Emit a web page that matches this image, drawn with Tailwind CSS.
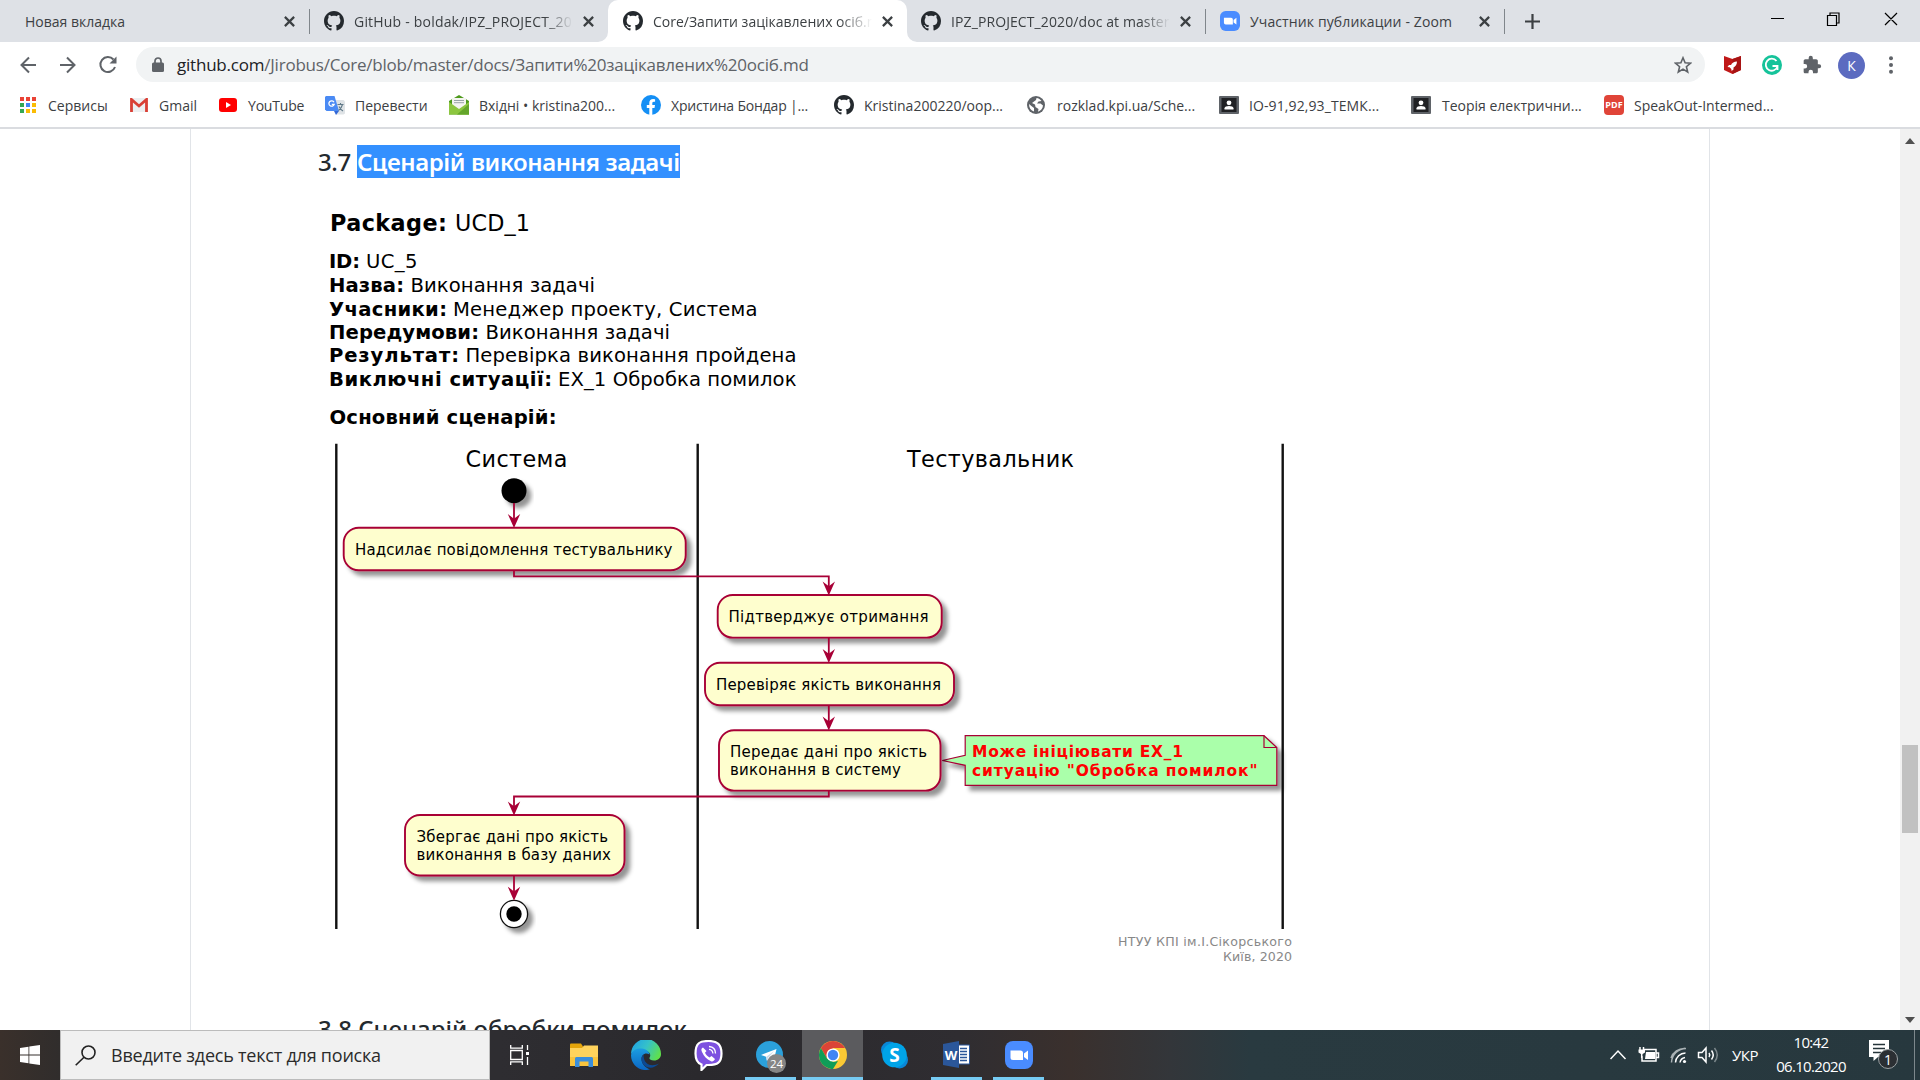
<!DOCTYPE html>
<html lang="uk">
<head>
<meta charset="utf-8">
<title>Core/Запити зацікавлених осіб.md</title>
<script src="https://cdn.jsdelivr.net/npm/@tailwindcss/browser@4"></script>
</head>
<body class="w-[1920px] h-[1080px] overflow-hidden bg-white flex flex-col font-['Open_Sans','Noto_Sans',sans-serif] text-[14px] text-[#3c4043]">

<svg class="hidden">
  <symbol id="gh" viewBox="0 0 16 16"><path fill="#24292e" d="M8 0C3.58 0 0 3.58 0 8c0 3.54 2.29 6.53 5.47 7.59.4.07.55-.17.55-.38 0-.19-.01-.82-.01-1.49-2.01.37-2.53-.49-2.69-.94-.09-.23-.48-.94-.82-1.13-.28-.15-.68-.52-.01-.53.63-.01 1.08.58 1.23.82.72 1.21 1.87.87 2.33.66.07-.52.28-.87.51-1.07-1.78-.2-3.64-.89-3.64-3.95 0-.87.31-1.59.82-2.15-.08-.2-.36-1.02.08-2.12 0 0 .67-.21 2.2.82.64-.18 1.32-.27 2-.27s1.36.09 2 .27c1.53-1.04 2.2-.82 2.2-.82.44 1.1.16 1.92.08 2.12.51.56.82 1.27.82 2.15 0 3.07-1.87 3.75-3.65 3.95.29.25.54.73.54 1.48 0 1.07-.01 1.93-.01 2.2 0 .21.15.46.55.38A8.01 8.01 0 0016 8c0-4.42-3.58-8-8-8z"/></symbol>
  <symbol id="x" viewBox="0 0 10 10"><path d="M.8.8 9.2 9.2M9.2.8.8 9.2" stroke="#3c4043" stroke-width="2"/></symbol>
  <symbol id="zoom" viewBox="0 0 28 28"><rect width="28" height="28" rx="8" fill="#4a8cff"/><path fill="#fff" d="M5.500 9.500h10a2.500 2.500 0 0 1 2.500 2.500v7H8a2.500 2.500 0 0 1-2.500-2.500zM19 12.500l4-3v9.500l-4-3z"/></symbol>
  <symbol id="contact" viewBox="0 0 20 18"><rect width="20" height="18" rx="1" fill="#5f6368"/><rect x="2.500" y="2" width="15" height="14" fill="#202124"/><circle cx="10" cy="6.800" r="2.400" fill="#fff"/><path d="M5.500 13.500v-1.200c0-3 9-3 9 0v1.200z" fill="#fff"/></symbol>
</svg>

<!-- Tab strip -->
<div class="h-[42px] shrink-0 bg-[#dee1e6] flex items-center">
  <div class="w-[310px] h-[25px] flex items-center border-r border-[#80868b] pl-[25px] pr-[14px]">
    <span class="flex-1 whitespace-nowrap">Новая вкладка</span>
    <svg class="w-[11px] h-[11px]"><use href="#x"/></svg>
  </div>
  <div class="w-[298px] flex items-center pl-[14px]">
    <svg class="w-5 h-5 shrink-0"><use href="#gh"/></svg>
    <span class="ml-[10px] w-[219px] overflow-hidden whitespace-nowrap tracking-[0.2px] [mask-image:linear-gradient(to_right,black_87%,transparent)]">GitHub - boldak/IPZ_PROJECT_2020</span>
    <svg class="w-[11px] h-[11px] ml-[10px]"><use href="#x"/></svg>
  </div>
  <div class="relative w-[299px] h-[42px] bg-white rounded-t-[10px] flex items-center pl-[15px]">
    <svg class="absolute -left-[10px] bottom-0 w-[10px] h-[10px]" viewBox="0 0 10 10"><path d="M10 0v10H0A10 10 0 0 0 10 0z" fill="#fff"/></svg>
    <svg class="absolute -right-[10px] bottom-0 w-[10px] h-[10px]" viewBox="0 0 10 10"><path d="M0 0v10h10A10 10 0 0 1 0 0z" fill="#fff"/></svg>
    <svg class="w-5 h-5 shrink-0"><use href="#gh"/></svg>
    <span class="ml-[10px] w-[219px] overflow-hidden whitespace-nowrap [mask-image:linear-gradient(to_right,black_85%,transparent)]">Core/Запити зацікавлених осіб.md</span>
    <svg class="w-[11px] h-[11px] ml-[10px]"><use href="#x"/></svg>
  </div>
  <div class="w-[299px] h-[25px] border-r border-[#80868b] flex items-center pl-[14px]">
    <svg class="w-5 h-5 shrink-0"><use href="#gh"/></svg>
    <span class="ml-[10px] w-[219px] overflow-hidden whitespace-nowrap tracking-[0.1px] [mask-image:linear-gradient(to_right,black_87%,transparent)]">IPZ_PROJECT_2020/doc at master</span>
    <svg class="w-[11px] h-[11px] ml-[10px]"><use href="#x"/></svg>
  </div>
  <div class="w-[299px] h-[25px] border-r border-[#80868b] flex items-center pl-[14px]">
    <svg class="w-5 h-5 shrink-0"><use href="#zoom"/></svg>
    <span class="ml-[10px] w-[229px] whitespace-nowrap tracking-[0.12px]">Участник публикации - Zoom</span>
    <svg class="w-[11px] h-[11px]"><use href="#x"/></svg>
  </div>
  <svg class="w-[15px] h-[15px] ml-[20px]" viewBox="0 0 15 15"><path d="M7.500 0v15M0 7.500h15" stroke="#3c4043" stroke-width="2.200"/></svg>
  <svg class="w-[130px] h-[16px] ml-[231px] mb-[5px]" viewBox="0 0 130 16" fill="none" stroke="#000" stroke-width="1.200"><path d="M0 7.500h13M56.500 4.500h9v10h-9zM59 4.500v-2.500h9v10h-2.500M114 2l12 12M126 2l-12 12"/></svg>
</div>

<!-- Address bar -->
<div class="h-[46px] shrink-0 flex items-center">
  <svg class="w-[98px] h-[20px] ml-[20px]" viewBox="0 0 98 20" fill="none" stroke="#5f6368" stroke-width="2"><path d="M16 10H2M9 2.500 1.500 10 9 17.500M40 10h14M47 2.500 54.500 10 47 17.500M93.500 4.500A7.500 7.500 0 1 0 95 12"/><path d="M96.500 1.500v7h-7z" fill="#5f6368" stroke="none"/></svg>
  <div class="ml-[18px] w-[1569px] h-[35px] rounded-full bg-[#f1f3f4] flex items-center pl-[16px] pr-[13px] mb-[1px]">
    <svg class="w-[12px] h-[16px]" viewBox="0 0 12 16"><rect y="5.500" width="12" height="9.500" rx="1.500" fill="#5f6368"/><path d="M3 6V4a3 3 0 0 1 6 0v2" fill="none" stroke="#5f6368" stroke-width="1.700"/></svg>
    <span class="ml-[13px] flex-1 text-[17px] tracking-[-0.22px] text-[#5f6368] whitespace-nowrap"><span class="text-[#202124]">github.com</span>/Jirobus/Core/blob/master/docs/Запити%20зацікавлених%20осіб.md</span>
    <svg class="w-[18px] h-[18px]" viewBox="0 0 18 18"><path d="M9 1.800 11.100 6.800l5.400.4-4.100 3.500 1.300 5.300L9 13.100 4.300 16l1.300-5.300L1.500 7.200l5.400-.4z" fill="none" stroke="#5f6368" stroke-width="1.600"/></svg>
  </div>
  <svg class="w-[17px] h-[18px] ml-[19px]" viewBox="0 0 17 18"><path d="M0 0 8.500 3 17 0v14l-8.500 4L0 14z" fill="#c01818"/><path d="M8.500 3 17 0v14l-8.500 4z" fill="#a81414"/><path d="M13 5.500c-3 0-5 1.500-6 3.500H5l-1.500 2 2 .2 1.800 1.800.3 2 1.900-1.500V11.500c2-1 3.500-3 3.500-6z" fill="#fff"/></svg>
  <svg class="w-[20px] h-[20px] ml-[21px]" viewBox="0 0 20 20"><circle cx="10" cy="10" r="10" fill="#15c39a"/><path d="M14.500 6A6 6 0 1 0 15.500 11.500M10.500 11h5v4" fill="none" stroke="#fff" stroke-width="1.800"/></svg>
  <svg class="w-[20px] h-[20px] ml-[20px]" viewBox="0 0 24 24"><path fill="#5f6368" d="M20.500 11H19V7c0-1.100-.9-2-2-2h-4V3.500a2.500 2.500 0 0 0-5 0V5H4c-1.100 0-2 .9-2 2v3.800h1.500a2.700 2.700 0 0 1 0 5.400H2V20c0 1.100.9 2 2 2h3.800v-1.500a2.700 2.700 0 0 1 5.400 0V22H17c1.100 0 2-.9 2-2v-4h1.500a2.500 2.500 0 0 0 0-5z"/></svg>
  <div class="w-[27px] h-[27px] rounded-full bg-[#5c6bc0] text-white flex items-center justify-center ml-[16px]">К</div>
  <svg class="w-[4px] h-[18px] ml-[24px]" viewBox="0 0 4 18" fill="#5f6368"><circle cx="2" cy="2.200" r="2"/><circle cx="2" cy="9" r="2"/><circle cx="2" cy="15.800" r="2"/></svg>
</div>

<!-- Bookmarks -->
<div class="h-[41px] shrink-0 border-b-2 border-[#dadce0] flex items-center pl-[20px] pb-[5px] whitespace-nowrap">
  <div class="w-[110px] flex items-center"><span class="w-[28px] shrink-0"><svg class="w-4 h-4" viewBox="0 0 16 16"><g fill="#ea4335"><path d="M0 0h4v4H0zM6 0h4v4H6zM12 0h4v4h-4z"/></g><path fill="#34a853" d="M0 6h4v4H0zM0 12h4v4H0z"/><path fill="#4285f4" d="M6 6h4v4H6z"/><path fill="#fbbc04" d="M12 6h4v4h-4zM6 12h4v4H6zM12 12h4v4h-4z"/></svg></span>Сервисы</div>
  <div class="w-[89px] flex items-center"><span class="w-[29px] shrink-0"><svg class="w-[18px] h-[14px]" viewBox="0 0 18 14"><path fill="#eceff1" d="M1 0h16v14H1z"/><path d="M1.500 14V1.500L9 8l7.500-6.500V14" fill="none" stroke="#d93f35" stroke-width="2.800"/></svg></span>Gmail</div>
  <div class="w-[106px] flex items-center"><span class="w-[29px] shrink-0"><svg class="w-[18px] h-[14px]" viewBox="0 0 18 14"><rect width="18" height="14" rx="3" fill="#f00"/><path fill="#fff" d="M7 4v6l5-3z"/></svg></span><span class="tracking-[-0.2px]">YouTube</span></div>
  <div class="w-[124px] flex items-center"><span class="w-[30px] shrink-0"><svg class="w-[20px] h-[19px]" viewBox="0 0 20 19"><path fill="#dfe3e6" d="M7 4h11.500L20 5.500V17.500L18.500 18.500H11z"/><path fill="#4a8af4" d="M1 0h8.500l4.500 15H1.500L0 13.500V1z"/><path fill="#3367d6" d="M9 15h5l-3 4z"/><path d="M9 6.200A2.700 2.700 0 1 0 9.200 8.300H6.800" fill="none" stroke="#fff" stroke-width="1.300"/><path d="M12.500 8.500H18.500M15.500 7v1.500M17.500 8.500q-1 4-4 6M14 10.500q1.500 3 4 4.500" fill="none" stroke="#607988" stroke-width="1.100"/></svg></span>Перевести</div>
  <div class="w-[192px] flex items-center"><span class="w-[30px] shrink-0"><svg class="w-[20px] h-[20px]" viewBox="0 0 20 20"><path fill="#4e9a1c" d="M0 6 10 0l10 6v13.500H0z"/><path fill="#f4f4f0" d="M3 3h14v11H3z"/><path d="M5 5.500h10M5 7.700h10" stroke="#9aa5a8"/><path fill="#8cc63f" d="M0 7l10 7L20 7v12.500H0z"/><path fill="#64a52a" d="M20 19.500V9L8 19.500z"/></svg></span>Вхідні • kristina200...</div>
  <div class="w-[193px] flex items-center"><span class="w-[30px] shrink-0"><svg class="w-[20px] h-[20px]" viewBox="0 0 20 20"><circle cx="10" cy="10" r="10" fill="#148ff5"/><path fill="#fff" d="M8.300 20v-7H5.800v-2.900h2.500V8c0-2.600 1.500-3.900 3.800-3.900l2 .2v2.400h-1.300c-1.200 0-1.500.8-1.500 1.500v1.900h2.700l-.5 2.900h-2.200v7z"/></svg></span><span class="tracking-[-0.18px]">Христина Бондар |...</span></div>
  <div class="w-[193px] flex items-center"><span class="w-[30px] shrink-0"><svg class="w-[20px] h-[20px]"><use href="#gh"/></svg></span>Kristina200220/oop...</div>
  <div class="w-[192px] flex items-center"><span class="w-[30px] shrink-0"><svg class="w-[18px] h-[18px]" viewBox="0 0 18 18"><circle cx="9" cy="9" r="9" fill="#5f6368"/><path fill="#fff" d="M9.500 2c2 .2 4 1.500 5 3l-3 .5-1.500 2h3.500l2.500 2c-.2 3-2.500 5.500-5 6.200l.5-2.700-3-2L8 8.500 5 7 9 4zM2 8l3 2.500 2 1.500v3.500C4 14.500 2 12 2 8z"/></svg></span>rozklad.kpi.ua/Sche...</div>
  <div class="w-[192px] flex items-center"><span class="w-[30px] shrink-0"><svg class="w-[20px] h-[18px]"><use href="#contact"/></svg></span><span class="tracking-[0.1px]">ІО-91,92,93_ТЕМК...</span></div>
  <div class="w-[193px] flex items-center"><span class="w-[31px] shrink-0"><svg class="w-[20px] h-[18px]"><use href="#contact"/></svg></span>Теорія електрични...</div>
  <div class="flex items-center"><span class="w-5 h-5 mr-[10px] rounded-sm bg-[#e04438] text-white text-[9px] font-bold flex items-center justify-center">PDF</span>SpeakOut-Intermed...</div>
</div>

<!-- Page -->
<div class="h-[901px] shrink-0 flex overflow-hidden">
  <main class="ml-[190px] w-[1520px] h-full border-x border-[#e1e4e8] pl-[127px] pt-4 font-['Noto_Sans','Open_Sans',sans-serif] text-[#24292e] overflow-hidden">
    <h3 class="text-[24px] leading-[33px] font-medium whitespace-nowrap flex"><span class="w-[39px] tracking-[-0.4px]">3.7</span><span class="bg-[#3390ff] text-white w-[323px] font-semibold tracking-[-0.4px]">Сценарій виконання задачі</span></h3>
    <svg class="mt-3 w-[982px] h-[810px] block font-['DejaVu_Sans',sans-serif]" viewBox="318 190 982 810" fill="#000">
      <defs>
        <filter id="sh" x="-20%" y="-20%" width="150%" height="160%"><feDropShadow dx="4.800" dy="4.800" stdDeviation="2" flood-color="#000" flood-opacity=".42"/></filter>
        <path id="head" d="M-6.200-13 0 1 6.200-13 0-8.300z" fill="#a80036"/>
      </defs>
      <g font-size="22.300"><text x="330" y="230.700" font-weight="bold" textLength="117">Package:</text><text x="455" y="230.700" textLength="75">UCD_1</text></g>
      <g font-size="19.600" font-weight="bold">
        <text x="329" y="267.700" textLength="31">ID:</text>
        <text x="329" y="292" textLength="75">Назва:</text>
        <text x="329" y="315.500" textLength="118">Учасники:</text>
        <text x="329" y="338.700" textLength="150">Передумови:</text>
        <text x="329" y="362.300" textLength="130">Результат:</text>
        <text x="329" y="386.300" textLength="223">Виключні ситуації:</text>
        <text x="329.500" y="423.700" textLength="227">Основний сценарій:</text>
      </g>
      <g font-size="19.600">
        <text x="366" y="267.700" textLength="51.500">UC_5</text>
        <text x="410.500" y="292" textLength="184.500">Виконання задачі</text>
        <text x="453" y="315.500" textLength="304.500">Менеджер проекту, Система</text>
        <text x="485.500" y="338.700" textLength="184.500">Виконання задачі</text>
        <text x="465.500" y="362.300" textLength="331">Перевірка виконання пройдена</text>
        <text x="558" y="386.300" textLength="238.500">EX_1 Обробка помилок</text>
      </g>
      <g font-size="22.300"><text x="465.500" y="467" textLength="102">Система</text><text x="907" y="467" textLength="167">Тестувальник</text></g>
      <path d="M336.300 443.700V929M697.700 443.700V929M1282.700 443.700V929" stroke="#111" stroke-width="2.400"/>

      <g fill="#fefece" stroke="#a80036" stroke-width="1.900">
        <circle cx="514" cy="490.700" r="12.500" fill="#000" stroke="none" filter="url(#sh)"/>
        <rect x="343.700" y="527.700" width="342" height="42.600" rx="15" filter="url(#sh)"/>
        <rect x="717.700" y="595" width="224" height="42.600" rx="15" filter="url(#sh)"/>
        <rect x="705" y="662.700" width="249" height="42.600" rx="15" filter="url(#sh)"/>
        <path d="M965.200 735.700H1264l12.800 11.800v37.800H965.200v-20l-22.900-4.800 22.900-5.200z" fill="#aaffaa" stroke-width="1.200" filter="url(#sh)"/>
        <path d="M1264 735.700v11.800h12.800" fill="none" stroke-width="1.200"/>
        <rect x="719" y="730.300" width="221.500" height="60.300" rx="15" filter="url(#sh)"/>
        <rect x="405" y="815" width="219.500" height="60.500" rx="15" filter="url(#sh)"/>
        <circle cx="514" cy="914" r="13.600" fill="#fff" stroke="#111" stroke-width="1.300" filter="url(#sh)"/>
        <circle cx="514" cy="914" r="7.700" fill="#000" stroke="none"/>
      </g>
      <g fill="none" stroke="#a80036" stroke-width="1.800">
        <path d="M514 503v20M514 570.500v5.800h314.800v14M828.800 637.500v20M828.800 705.500v20M828.800 790.500v6H514v14M514 875.500v20"/>
      </g>
      <use href="#head" x="514" y="527"/><use href="#head" x="828.800" y="594.500"/><use href="#head" x="828.800" y="662"/><use href="#head" x="828.800" y="729.500"/><use href="#head" x="514" y="814.500"/><use href="#head" x="514" y="899.700"/>
      <g font-size="15">
        <text x="355" y="554.700" textLength="317.500">Надсилає повідомлення тестувальнику</text>
        <text x="728.500" y="622" textLength="200">Підтверджує отримання</text>
        <text x="716" y="689.500" textLength="225">Перевіряє якість виконання</text>
        <text x="730" y="757" textLength="197">Передає дані про якість</text>
        <text x="730" y="774.700" textLength="171">виконання в систему</text>
        <text x="416.500" y="842.300" textLength="191.500">Збергає дані про якість</text>
        <text x="416.500" y="860" textLength="194.500">виконання в базу даних</text>
      </g>
      <g font-size="15.500" font-weight="bold" fill="#f00">
        <text x="972" y="757" textLength="211">Може ініціювати EX_1</text>
        <text x="972" y="776" textLength="285.500">ситуацію "Обробка помилок"</text>
      </g>
      <g font-size="12.600" fill="#888">
        <text x="1118" y="946" textLength="174">НТУУ КПІ ім.І.Сікорського</text>
        <text x="1223" y="961" textLength="69">Київ, 2020</text>
      </g>
    </svg>
    <h3 class="mt-3 text-[24px] leading-[33px] font-medium whitespace-nowrap">3.8 Сценарій обробки помилок</h3>
  </main>
  <div class="ml-auto w-5 h-full bg-[#f1f1f1] flex flex-col items-center">
    <svg class="w-[10px] h-[6px] mt-[9px]" viewBox="0 0 10 6"><path d="M0 6 5 0l5 6z" fill="#505050"/></svg>
    <div class="w-4 h-[88px] mt-[601px] bg-[#c1c1c1]"></div>
    <svg class="w-[10px] h-[6px] mt-auto mb-[7px]" viewBox="0 0 10 6"><path d="M0 0 5 6l5-6z" fill="#505050"/></svg>
  </div>
</div>

<!-- Taskbar -->
<div class="h-[50px] shrink-0 flex items-center text-white bg-[linear-gradient(to_right,#3a302b_0,#302d2c_60px,#2e2d31_500px,#2a292d_700px,#2f2d31_960px,#3a302d_1070px,#33363a_1170px,#293a40_1250px,#27383e_1920px)]">
  <div class="w-[60px] flex justify-center"><svg class="w-5 h-5" viewBox="0 0 20 20" fill="#fff"><path d="M0 3 8.500 1.700v7.800H0zM9.300 1.600 20 0v9.500H9.300zM0 10.400h8.500v7.900L0 17zM9.300 10.400H20V20L9.300 18.400z"/></svg></div>
  <div class="w-[430px] h-[50px] bg-[#f1f1f1] border border-[#bcbcbc] flex items-center pl-[14px]">
    <svg class="w-[21px] h-[21px]" viewBox="0 0 21 21" fill="none" stroke="#222" stroke-width="1.600"><circle cx="13.500" cy="7.500" r="6.500"/><path d="M9 12.200.700 20.300"/></svg>
    <span class="ml-[15px] text-[18px] tracking-[-0.22px] text-[#2b2b2b] whitespace-nowrap">Введите здесь текст для поиска</span>
  </div>
  <div class="w-[60px] flex justify-center"><svg class="w-[20px] h-[20px]" viewBox="0 0 20 20" fill="none" stroke="#fff" stroke-width="1.300"><path d="M.7 0v3.200h11.600V0M.7 20v-3.200h11.600V20M.7 5.500h11.600v9H.7zM17.500 0v5M17.500 12v8"/><path d="M16 7h3v3h-3z" fill="#fff" stroke="none"/></svg></div>
  <div class="w-[68px] flex justify-center"><svg class="w-[28px] h-[24px]" viewBox="0 0 28 24"><path fill="#e5a50a" d="M0 1.500Q0 .5 1 .5h10l2 3V8H0z"/><path fill="#ffd35c" d="M0 5h12l2-2.500h14V22H0z"/><path fill="#f8c33c" d="M0 14h28v9H0z"/><path fill="#3a8edb" d="M5 24v-8.500q0-1.500 1.500-1.500h15q1.500 0 1.500 1.500V24h-4.500v-5.500h-9V24z"/></svg></div>
  <div class="w-[56px] flex justify-center"><svg class="w-[30px] h-[30px]" viewBox="0 0 30 30"><defs><linearGradient id="e1" x1="0" x2="1" y1=".2" y2=".6"><stop offset="0" stop-color="#1ea2e6"/><stop offset=".5" stop-color="#36c2c8"/><stop offset="1" stop-color="#5fe04c"/></linearGradient><linearGradient id="e2" x1="0" x2="0" y1="0" y2="1"><stop offset="0" stop-color="#1b9de2"/><stop offset="1" stop-color="#0b66c3"/></linearGradient></defs><path fill="url(#e1)" d="M0 14A15 15 0 0 1 30 14c0 4-3 6.500-7 6.500-3.500 0-5-1.500-4.500-2.800 1-1.700 1-3 0-4.700C16 9 5 8 0 14z"/><path fill="url(#e2)" d="M0 15C1 9.500 7 8 11 8.500c4 .5 7 3 7.600 6C14 12 10.500 15 10.500 19c0 5 4 9 8.500 10.300C9 32.500 0 25 0 15z"/><path fill="#0c4a94" d="M12.500 14.500c-3 3-2.500 8 1 11 4.500 3.800 10.500 2.500 14.500-2-4 2-9.500 2.500-12.500-.5-2.500-2.200-3-5.500-3-8.500z"/></svg></div>
  <div class="w-[68px] flex justify-center"><svg class="w-[29px] h-[31px]" viewBox="0 0 29 31"><path d="M14.500 1C6 1 1.500 2.800 1.500 13.500c0 6 1.500 9.500 6 11V30l5-5h2c9 0 13-2.500 13-11.500S23.500 1 14.500 1z" fill="#7d51e0" stroke="#fff" stroke-width="2.200"/><path d="M9 7.500c-2 1-2 2.500-1 4.500 2 4.500 4.500 7.200 9 9.200 1.500.8 3-.2 4-2.200l-3.500-3-2 1.500c-2-1-3.500-2.500-4.500-4.700L12.500 11z" fill="#fff"/><path d="M15 6.500c4.500.3 6.500 3 6.500 7M15 9.300c2.700.3 3.800 1.700 3.900 4.200" fill="none" stroke="#fff" stroke-width="1.300"/></svg></div>
  <div class="relative w-[51px] h-[50px] ml-[3px] flex flex-col items-center border-b-3 border-[#76cbf3]">
    <svg class="w-[27px] h-[27px] mt-[11px] mr-[2px]" viewBox="0 0 27 27"><circle cx="13.500" cy="13.500" r="13.500" fill="#2ba0da"/><path fill="#fff" d="M5 14 20.500 8l-3 12.500-4.500-3-2 2.500-1-4.200z"/><path d="m10 16 8-6-6 7-1 3z" fill="#c8daea"/></svg>
    <span class="absolute left-[22px] top-[24px] w-[19px] h-[19px] rounded-full bg-[#858585] text-[11.5px] flex items-center justify-center">24</span>
  </div>
  <div class="w-[61px] h-[50px] ml-[6px] bg-[#5b5b5e] border-b-3 border-[#76cbf3] flex flex-col items-center"><svg class="w-[28px] h-[28px] mt-[11px]" viewBox="0 0 28 28"><circle cx="14" cy="14" r="14" fill="#fbc934"/><path fill="#db4437" d="M1.900 7A14 14 0 0 1 26.100 7H14L8 17.500z"/><path fill="#0f9d58" d="M1.900 7 8 17.500l6 3.500h.2L12.500 28A14 14 0 0 1 1.900 7z"/><path fill="#0f9d58" d="M8 17.500 14 21l5-1-5 8h-2z"/><circle cx="14" cy="14" r="6.600" fill="#fff"/><circle cx="14" cy="14" r="5.200" fill="#4285f4"/></svg></div>
  <div class="w-[62px] flex justify-center"><svg class="w-[27px] h-[28px]" viewBox="0 0 27 28"><circle cx="8.500" cy="9" r="8.500" fill="#0a87d6"/><circle cx="18.500" cy="19" r="8.500" fill="#0a87d6"/><circle cx="13.500" cy="14" r="12.300" fill="#00a4e8"/><text x="13.500" y="21" font-size="19" font-weight="bold" text-anchor="middle" fill="#fff">S</text></svg></div>
  <div class="w-[51px] h-[50px] ml-[6px] border-b-3 border-[#76cbf3] flex flex-col items-center"><svg class="w-[28px] h-[27px] mt-[11px]" viewBox="0 0 28 27"><path d="M14 4h12.500v19H14z" fill="#fff" stroke="#2b579a"/><path d="M17 7.500h7M17 10.500h7M17 13.500h7M17 16.500h7M17 19.500h7" stroke="#2b579a" stroke-width="1.300"/><path fill="#2b579a" d="M0 3 16 0v27L0 24z"/><text x="8" y="18.500" font-size="13" font-weight="bold" text-anchor="middle" fill="#fff">W</text></svg></div>
  <div class="w-[51px] h-[50px] ml-[11px] border-b-3 border-[#76cbf3] flex flex-col items-center"><svg class="w-[28px] h-[28px] mt-[11px]"><use href="#zoom"/></svg></div>
  <svg class="w-[110px] h-[20px] ml-[566px]" viewBox="1610 1045 110 20" fill="none" stroke="#fff" stroke-width="1.500">
    <path d="M1610.500 1059l7.500-8 7.500 8"/>
    <path d="M1644 1049.500h12v11.500h-14v-5M1656.500 1053h2v4.500h-2M1640 1047v3M1643.500 1047v3M1641.700 1054v4"/><path d="M1638.500 1049.500h6.500v3l-3.200 2-3.300-2zM1646 1052h9v7h-10z" fill="#fff" stroke="none"/>
    <path d="M1680 1062.500a6 6 0 0 1 5-5M1675.500 1062.500a10 10 0 0 1 10-9.500" /><path d="M1671.500 1062.500a14.500 14.500 0 0 1 14.500-14M1671 1058a14 14 0 0 1 14-9.500" stroke="#aab2b5"/><circle cx="1684.500" cy="1061.500" r="1.600" fill="#fff" stroke="none"/>
    <path d="M1698.500 1052.500h3.500l4-4.500v14l-4-4.500h-3.500zM1709 1053q1.500 2 0 4M1711.500 1050.500q3.500 4.500 0 9"/><path d="M1714.500 1048q5.500 7 0 14" stroke="#7d888c"/>
  </svg>
  <span class="ml-[12px] w-[28px] text-[15px] tracking-[-0.5px]">УКР</span>
  <div class="ml-[15px] w-[72px] text-[15px] leading-[24px] text-center tracking-[-0.68px] pb-[2px]"><div>10:42</div><div>06.10.2020</div></div>
  <div class="relative w-[30px] h-[30px] ml-[22px]">
    <svg class="w-[20px] h-[22px]" viewBox="0 0 20 22"><path fill="#fff" d="M0 0h20v17H9l-4.500 4V17H0z"/><path d="M4 4.500h12M4 8.500h12M4 12.500h8" stroke="#25343a" stroke-width="1.500"/></svg>
    <span class="absolute left-[9px] top-[9px] w-5 h-5 rounded-full border-[1.5px] border-[#9aa0a2] bg-[#2b2f33] text-[14px] flex items-center justify-center">1</span>
  </div>
  <div class="w-px h-[50px] bg-[#7d888c] ml-[15px]"></div>
</div>
</body>
</html>
